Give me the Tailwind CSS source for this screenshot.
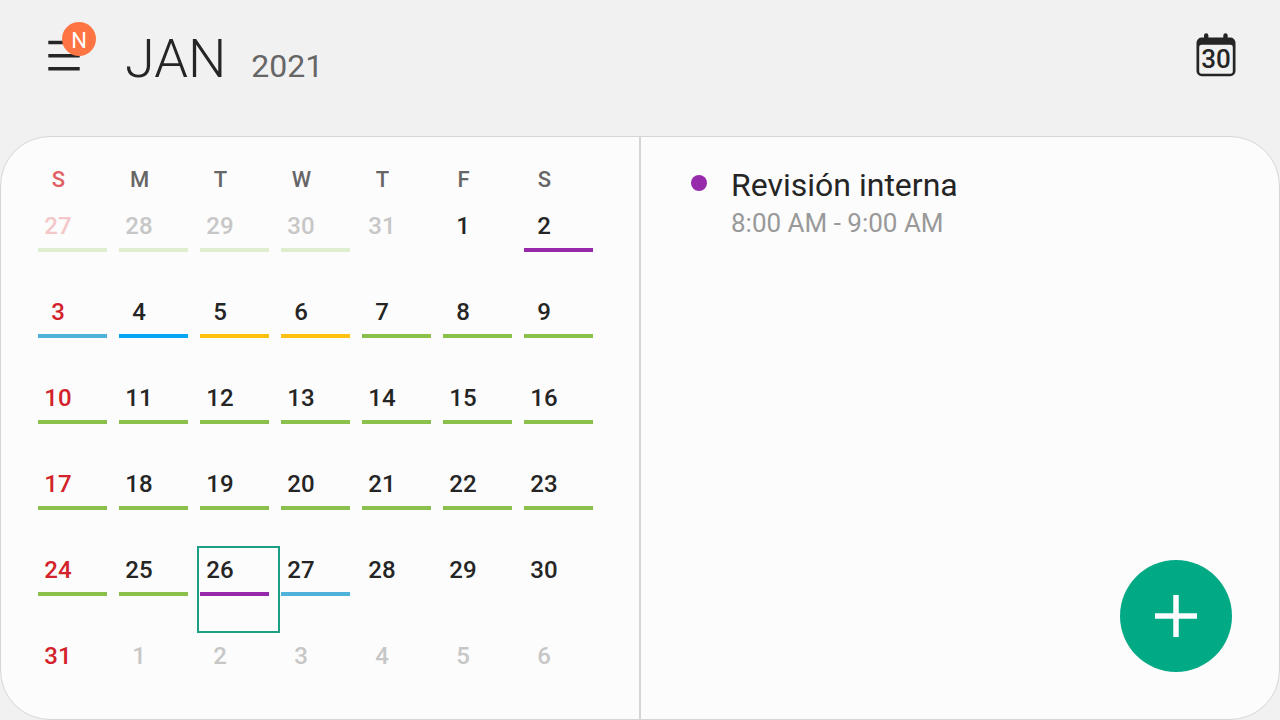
<!DOCTYPE html>
<html lang="es">
<head>
<meta charset="utf-8">
<meta name="viewport" content="width=device-width, initial-scale=1">
<title>Calendar</title>
<script src="https://cdn.jsdelivr.net/npm/@tailwindcss/browser@4"></script>
</head>
<body class="flex min-h-screen flex-col bg-[#f1f1f1] font-['Roboto',sans-serif] text-[#252525]">
<header class="flex h-[136px] shrink-0 items-start pr-11 pl-12">
  <button type="button" aria-label="Menu" class="relative mt-10 h-8 w-8">
    <svg viewBox="0 0 32 32" class="h-8 w-8" aria-hidden="true"><path d="M0.300 2.500H31.700M0.300 15.700H31.700M0.300 28.800H31.700" stroke="#252525" stroke-width="3.500"/></svg>
    <span class="absolute -top-[18px] left-[14px] flex h-[34px] w-[34px] items-center justify-center rounded-full bg-[#ff7443] pt-1 text-[22px] leading-none text-white">N</span>
  </button>
  <h1 class="mt-[29px] ml-[45px] flex items-baseline gap-[25px] leading-[60px]">
    <span class="text-[54px] font-light">JAN</span>
    <span class="text-[32px] font-normal text-[#666666]">2021</span>
  </h1>
  <button type="button" aria-label="Today" class="mt-8 ml-auto h-12 w-10">
    <svg viewBox="0 0 40 48" class="h-12 w-10">
      <path fill-rule="evenodd" d="M8 5.500V3.500a2.200 2.200 0 0 1 4.400 0V5.500H27.300V3.500a2.200 2.200 0 0 1 4.400 0V5.500H34a5.300 5.300 0 0 1 5.500 5.300V39a5.300 5.300 0 0 1-5.500 5.300H6A5.300 5.300 0 0 1 .5 39V10.800A5.300 5.300 0 0 1 6 5.500ZM5.500 12.700a2.300 2.300 0 0 0-2.300 2.300V39.200a2.500 2.500 0 0 0 2.500 2.500H34.300a2.500 2.500 0 0 0 2.500-2.500V15a2.300 2.300 0 0 0-2.300-2.300Z" fill="#252525"/>
      <text x="20" y="36" text-anchor="middle" font-size="26" font-weight="500" fill="#252525">30</text>
    </svg>
  </button>
</header>

<main class="grid grow grid-cols-[1fr_2px_1fr] rounded-[50px] border border-[#d6d6d6] bg-[#fcfcfc]">
  <section aria-label="January 2021" class="pt-[29px] pr-[34px] pl-[37px]">
    <table class="w-full table-fixed border-collapse text-2xl font-medium [&_button]:block [&_button]:h-12 [&_button]:w-10 [&_button]:text-center [&_i]:absolute [&_i]:top-[46px] [&_i]:right-3 [&_i]:left-0 [&_i]:h-1 [&_td]:relative [&_td]:h-[86px] [&_td]:p-0 [&_td]:align-top [&_td:first-child]:text-[#d3222a]">
      <thead>
        <tr class="h-9 text-left text-[22px] text-[#666666] [&_span]:block [&_span]:w-[41px] [&_span]:text-center [&_th]:p-0 [&_th]:align-top [&_th]:font-medium [&_th]:leading-7">
          <th scope="col" class="text-[#e06065]"><span>S</span></th><th scope="col"><span>M</span></th><th scope="col"><span>T</span></th><th scope="col"><span>W</span></th><th scope="col"><span>T</span></th><th scope="col"><span>F</span></th><th scope="col"><span>S</span></th>
        </tr>
      </thead>
      <tbody>
        <tr>
          <td><button type="button" class="text-[#f4c7c9]">27</button><i class="bg-[#deeecf]"></i></td>
          <td><button type="button" class="text-[#c7c7c7]">28</button><i class="bg-[#deeecf]"></i></td>
          <td><button type="button" class="text-[#c7c7c7]">29</button><i class="bg-[#deeecf]"></i></td>
          <td><button type="button" class="text-[#c7c7c7]">30</button><i class="bg-[#deeecf]"></i></td>
          <td><button type="button" class="text-[#c7c7c7]">31</button></td>
          <td><button type="button">1</button></td>
          <td><button type="button">2</button><i class="bg-[#9729ab]"></i></td>
        </tr>
        <tr>
          <td><button type="button">3</button><i class="bg-[#4fb3d9]"></i></td>
          <td><button type="button">4</button><i class="bg-[#04a5f3]"></i></td>
          <td><button type="button">5</button><i class="bg-[#fcc111]"></i></td>
          <td><button type="button">6</button><i class="bg-[#fcc111]"></i></td>
          <td><button type="button">7</button><i class="bg-[#8bc04c]"></i></td>
          <td><button type="button">8</button><i class="bg-[#8bc04c]"></i></td>
          <td><button type="button">9</button><i class="bg-[#8bc04c]"></i></td>
        </tr>
        <tr>
          <td><button type="button">10</button><i class="bg-[#8bc04c]"></i></td>
          <td><button type="button">11</button><i class="bg-[#8bc04c]"></i></td>
          <td><button type="button">12</button><i class="bg-[#8bc04c]"></i></td>
          <td><button type="button">13</button><i class="bg-[#8bc04c]"></i></td>
          <td><button type="button">14</button><i class="bg-[#8bc04c]"></i></td>
          <td><button type="button">15</button><i class="bg-[#8bc04c]"></i></td>
          <td><button type="button">16</button><i class="bg-[#8bc04c]"></i></td>
        </tr>
        <tr>
          <td><button type="button">17</button><i class="bg-[#8bc04c]"></i></td>
          <td><button type="button">18</button><i class="bg-[#8bc04c]"></i></td>
          <td><button type="button">19</button><i class="bg-[#8bc04c]"></i></td>
          <td><button type="button">20</button><i class="bg-[#8bc04c]"></i></td>
          <td><button type="button">21</button><i class="bg-[#8bc04c]"></i></td>
          <td><button type="button">22</button><i class="bg-[#8bc04c]"></i></td>
          <td><button type="button">23</button><i class="bg-[#8bc04c]"></i></td>
        </tr>
        <tr>
          <td><button type="button">24</button><i class="bg-[#8bc04c]"></i></td>
          <td><button type="button">25</button><i class="bg-[#8bc04c]"></i></td>
          <td aria-selected="true"><button type="button">26</button><i class="bg-[#9729ab]"></i><span class="pointer-events-none absolute top-0 right-px -bottom-px -left-[3px] border-2 border-[#1b9e83]"></span></td>
          <td><button type="button">27</button><i class="bg-[#4fb3d9]"></i></td>
          <td><button type="button">28</button></td>
          <td><button type="button">29</button></td>
          <td><button type="button">30</button></td>
        </tr>
        <tr>
          <td><button type="button">31</button></td>
          <td><button type="button" class="text-[#c7c7c7]">1</button></td>
          <td><button type="button" class="text-[#c7c7c7]">2</button></td>
          <td><button type="button" class="text-[#c7c7c7]">3</button></td>
          <td><button type="button" class="text-[#c7c7c7]">4</button></td>
          <td><button type="button" class="text-[#c7c7c7]">5</button></td>
          <td><button type="button" class="text-[#c7c7c7]">6</button></td>
        </tr>
      </tbody>
    </table>
  </section>
  <div class="bg-[#d6d6d6]"></div>
  <section aria-label="Events" class="flex flex-col justify-between pt-7 pr-[47px] pb-[47px] pl-[50px]">
    <article class="flex gap-6">
      <span class="mt-[10px] h-4 w-4 rounded-full bg-[#9729ab]"></span>
      <div>
        <h2 class="text-[32px] leading-10">Revisión interna</h2>
        <p class="text-[26px] leading-9 text-[#999999]">8:00 AM - 9:00 AM</p>
      </div>
    </article>
    <button type="button" aria-label="Add event" class="flex h-28 w-28 items-center justify-center self-end rounded-full bg-[#02a985]">
      <svg viewBox="0 0 42 42" class="h-[42px] w-[42px]" aria-hidden="true"><path d="M21 0V42M0 21H42" stroke="#fcfcfc" stroke-width="5.500"/></svg>
    </button>
  </section>
</main>
</body>
</html>
